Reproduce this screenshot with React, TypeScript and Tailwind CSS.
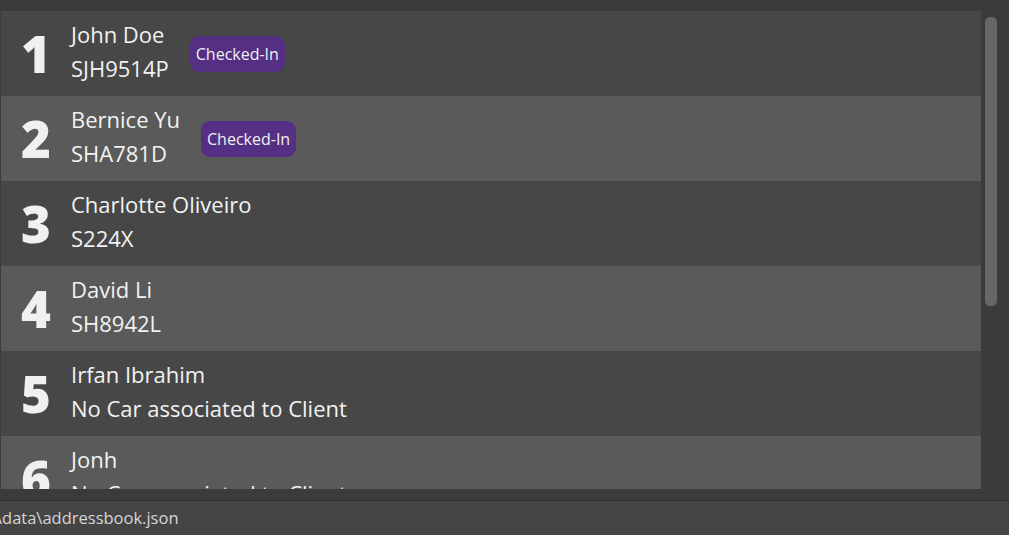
import React from 'react';

type Person = {
  name: string;
  car: string;
  checkedIn?: boolean;
};

const people: Person[] = [
  { name: 'John Doe', car: 'SJH9514P', checkedIn: true },
  { name: 'Bernice Yu', car: 'SHA781D', checkedIn: true },
  { name: 'Charlotte Oliveiro', car: 'S224X' },
  { name: 'David Li', car: 'SH8942L' },
  { name: 'Irfan Ibrahim', car: 'No Car associated to Client' },
  { name: 'Jonh', car: 'No Car associated to Client' },
];

const PersonRow = ({ person, index }: { person: Person; index: number }) => {
  const even = index % 2 === 1;
  return (
    <div
      className={`flex h-[85px] shrink-0 items-center ${
        even ? 'bg-[#5a5a5a]' : 'bg-[#474747]'
      }`}
    >
      {/* Index number */}
      <div className="flex w-[70px] justify-center text-[51px] font-extrabold leading-none text-[#f0f0f0]">
        {index + 1}
      </div>

      <div className="flex items-center gap-[21px]">
        <div className="-mt-[5px] flex flex-col text-[22px] font-medium leading-[34px] text-[#f2f2f2]">
          <span>{person.name}</span>
          <span>{person.car}</span>
        </div>
        {person.checkedIn && (
          <span className="flex h-[36px] items-center rounded-[9px] bg-[#542f84] px-[6px] text-[16px] leading-none text-[#f0f0f0]">
            Checked-In
          </span>
        )}
      </div>
    </div>
  );
};

const App = () => {
  return (
    <div
      className="flex h-[535px] w-[1009px] flex-col overflow-hidden bg-[#3b3b3b]"
      style={{ fontFamily: '"Open Sans", "Noto Sans", sans-serif' }}
    >
      {/* List with scrollbar */}
      <div className="flex h-[489px] pt-[11px]">
        <div className="ml-[1px] flex w-[980px] flex-col overflow-hidden">
          {people.map((p, i) => (
            <PersonRow key={i} person={p} index={i} />
          ))}
        </div>
        <div className="ml-[4px] pt-[6px]">
          <div className="h-[289px] w-[12px] rounded-[5px] bg-[#676767]" />
        </div>
      </div>

      {/* Status bar */}
      <div className="mt-[11px] flex h-[35px] items-center border-t border-[#2f2f2f] bg-[#444444] text-[16.5px] text-[#d6d6d6]">
        <span className="-ml-[4px]">\data\addressbook.json</span>
      </div>
    </div>
  );
};

export default App;
